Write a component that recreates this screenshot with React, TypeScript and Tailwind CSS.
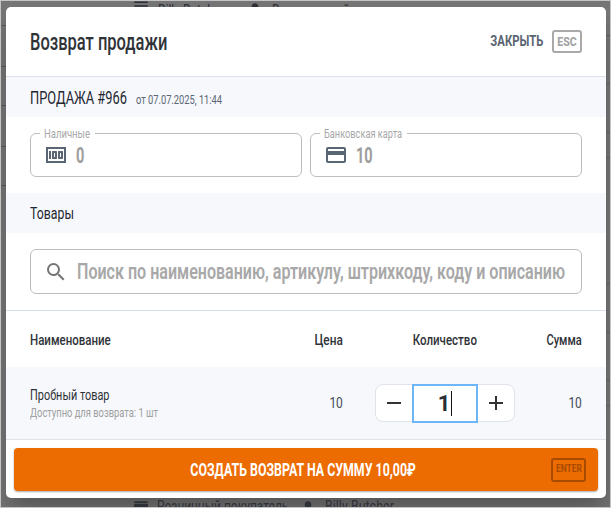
import type { ReactNode } from "react";
import { MdAdd, MdCreditCard, MdMenu, MdMoney, MdPerson, MdRemove, MdSearch, MdStore } from "react-icons/md";

// the reference font is a tall condensed face, so Roboto gets squeezed
function Sq({ className, children }: { className: string; children: ReactNode }) {
  return <span className={`inline-block whitespace-nowrap ${className}`}>{children}</span>;
}

function MoneyField({ label, notch, value, icon }: { label: ReactNode; notch: string; value: ReactNode; icon: ReactNode }) {
  return (
    <div className="relative flex h-[44px] flex-1 items-center rounded-md border border-[#bdbdbd] pl-[13px]">
      <span className={`absolute -top-[7px] left-[9px] h-[14px] overflow-hidden bg-white pl-[4px] text-[13px] leading-[14px] text-[#a8a8a8] ${notch}`}>
        {label}
      </span>
      {icon}
      <span className="ml-[8px] pt-[1px] text-[22px] font-bold text-[#9e9e9e]">{value}</span>
    </div>
  );
}

export default function App() {
  return (
    <div className="h-[508px] w-[611px] overflow-hidden border border-[#c4c4c4] bg-[#767676] font-['Roboto',sans-serif] text-[#2b2f36]">
      {/* page behind the overlay */}
      <div className="flex h-[6px] items-start overflow-hidden pl-[131px] text-[16px] leading-[16px] text-[#2e3038]">
        <MdMenu size={18} className="-mt-[4px] w-[26px] shrink-0 pr-[8px]" />
        <span className="w-[87px] pt-[2px]">
          <Sq className="origin-left scale-x-[0.75]">Billy Butch</Sq>
        </span>
        <MdPerson size={20} className="-mt-[1px] w-[27px] shrink-0 pr-[7px]" />
        <span className="pt-[2px]">
          <Sq className="origin-left scale-x-[0.75]">Возвращений</Sq>
        </span>
      </div>

      <div className="flex h-[491px]">
        <div className="w-[5px]">
          <div className="mt-[18px] h-px bg-[#5a5a5a]" />
          <div className="mt-[40px] h-px bg-[#5a5a5a]" />
          <div className="mt-[38px] h-px bg-[#5a5a5a]" />
          <div className="mt-[40px] h-px bg-[#5a5a5a]" />
          <div className="mt-[38px] h-px bg-[#5a5a5a]" />
        </div>

        <div className="flex w-[600px] shrink-0 flex-col rounded-[5px] bg-white shadow-[0_11px_15px_-7px_rgba(0,0,0,0.2),0_24px_38px_3px_rgba(0,0,0,0.14)]">
          <div className="flex h-[70px] items-center justify-between border-b border-[#dde2ee] px-[24px]">
            <h1 className="pt-[3px] text-[23px] font-medium text-[#2f3338]">
              <Sq className="origin-left scale-x-[0.717]">Возврат продажи</Sq>
            </h1>
            <div className="flex items-center gap-[9px]">
              <span className="text-[15px] font-bold text-[#5a6472]">
                <Sq className="origin-right scale-x-[0.753]">ЗАКРЫТЬ</Sq>
              </span>
              <span className="flex h-[23px] w-[30px] items-center justify-center rounded-[3px] border-2 border-[#a9a9a9] text-[13px] font-bold text-[#a0a0a0]">
                <Sq className="scale-x-[0.82]">ESC</Sq>
              </span>
            </div>
          </div>

          <div className="flex h-[40px] items-baseline bg-[#f6f8fc] pl-[24px] pt-[7px]">
            <span className="w-[106px] shrink-0 text-[18px] text-[#1f2730]">
              <Sq className="origin-left scale-x-[0.714]">ПРОДАЖА #966</Sq>
            </span>
            <span className="text-[13px] text-[#5c6675]">
              <Sq className="origin-left scale-x-[0.716]">от 07.07.2025, 11:44</Sq>
            </span>
          </div>

          <div className="flex h-[76px] items-center gap-[8px] px-[24px]">
            <MoneyField
              label={<Sq className="origin-left scale-x-[0.73]">Наличные</Sq>}
              notch="w-[55px]"
              value={<Sq className="origin-left scale-x-[0.66]">0</Sq>}
              icon={<MdMoney size={24} className="shrink-0 text-[#5b6675]" />}
            />
            <MoneyField
              label={<Sq className="origin-left scale-x-[0.71]">Банковская карта</Sq>}
              notch="w-[87px]"
              value={<Sq className="origin-left scale-x-[0.66]">10</Sq>}
              icon={<MdCreditCard size={24} className="shrink-0 text-[#5b6675]" />}
            />
          </div>

          <div className="flex h-[40px] items-center bg-[#f6f8fc] pl-[24px] pt-[2px] text-[16px] text-[#1f2730]">
            <Sq className="origin-left scale-x-[0.77]">Товары</Sq>
          </div>

          <div className="flex h-[78px] items-center border-b border-[#d9dfe8] px-[24px]">
            <div className="flex h-[45px] w-full items-center rounded-md border border-[#bdbdbd] pl-[13px]">
              <MdSearch size={24} className="shrink-0 text-[#757575]" />
              <span className="ml-[9px] w-[491px] overflow-hidden text-[22px] font-semibold text-[#a8a8a8]">
                <Sq className="origin-left scale-x-[0.73]">Поиск по наименованию, артикулу, штрихкоду, коду и описанию</Sq>
              </span>
            </div>
          </div>

          <div className="flex h-[56px] items-center px-[24px] pt-[2px] text-[15px] font-medium text-[#2f3338]">
            <span className="flex-1">
              <Sq className="origin-left scale-x-[0.766]">Наименование</Sq>
            </span>
            <span className="w-[40px] text-right">
              <Sq className="origin-right scale-x-[0.79]">Цена</Sq>
            </span>
            <span className="w-[172px] pl-[32px] text-center">
              <Sq className="scale-x-[0.769]">Количество</Sq>
            </span>
            <span className="w-[67px] text-right">
              <Sq className="origin-right scale-x-[0.74]">Сумма</Sq>
            </span>
          </div>

          <div className="flex h-[73px] items-center border-b border-[#dfe3ea] bg-[#f6f8fc] px-[24px]">
            <div className="flex flex-1 flex-col gap-[2px]">
              <span className="text-[15px] leading-[18px] text-[#2f3338]">
                <Sq className="origin-left scale-x-[0.728]">Пробный товар</Sq>
              </span>
              <span className="text-[13px] leading-[14px] text-[#a0a0a0]">
                <Sq className="origin-left scale-x-[0.72]">Доступно для возврата: 1 шт</Sq>
              </span>
            </div>
            <span className="w-[40px] text-right text-[15px] text-[#444b55]">
              <Sq className="origin-right scale-x-[0.8]">10</Sq>
            </span>
            <div className="ml-[32px] flex h-[38px] w-[140px] items-center rounded-lg border border-[#dfe3ea] bg-white">
              <span className="flex w-[36px] justify-center text-[#333]">
                <MdRemove size={24} />
              </span>
              <span className="flex h-[39px] w-[66px] items-center justify-center border-2 border-[#6db6f8] text-[22px] font-bold text-[#2b2f36]">
                1<span className="ml-[1px] inline-block h-[25px] w-px bg-[#111]" />
              </span>
              <span className="flex flex-1 justify-center text-[#333]">
                <MdAdd size={24} />
              </span>
            </div>
            <span className="w-[67px] text-right text-[15px] text-[#444b55]">
              <Sq className="origin-right scale-x-[0.8]">10</Sq>
            </span>
          </div>

          <div className="flex-1 px-[8px] pt-[8px]">
            <button className="relative flex h-[43px] w-full items-center justify-center rounded-[4px] bg-[#ed6c02] pr-[5px] text-[18px] font-bold text-white shadow-[0_1px_2px_rgba(0,0,0,0.35)]">
              <Sq className="scale-x-[0.687]">СОЗДАТЬ ВОЗВРАТ НА СУММУ 10,00₽</Sq>
              <span className="absolute right-[12px] flex h-[24px] w-[35px] items-center justify-center rounded-[3px] border-2 border-[#a84b00] text-[11px] text-[#a84b00]">
                <Sq className="scale-x-[0.77]">ENTER</Sq>
              </span>
            </button>
          </div>
        </div>

        <div className="flex-1">
          <div className="mt-[28px] h-px bg-[#5a5a5a]" />
          <div className="mt-[47px] h-px bg-[#5a5a5a]" />
          <div className="mt-[48px] h-px bg-[#5a5a5a]" />
          <div className="mt-[24px] h-px bg-[#5a5a5a]" />
          <div className="mt-[125px] h-px bg-[#5a5a5a]" />
          <div className="mt-[48px] h-px bg-[#5a5a5a]" />
          <div className="mt-[47px] h-px bg-[#5a5a5a]" />
          <div className="mt-[24px] h-px bg-[#5a5a5a]" />
        </div>
      </div>

      <div className="flex h-[9px] items-start overflow-hidden pl-[130px] pt-[1px] text-[16px] leading-[16px] text-[#2e3038]">
        <MdStore size={20} className="-mt-[1px] w-[26px] shrink-0 pr-[6px]" />
        <span className="w-[141px]">
          <Sq className="origin-left scale-x-[0.75]">Розничный покупатель</Sq>
        </span>
        <MdPerson size={20} className="-mt-[1px] w-[27px] shrink-0 pr-[7px]" />
        <span>
          <Sq className="origin-left scale-x-[0.78]">Billy Butcher</Sq>
        </span>
      </div>
    </div>
  );
}
